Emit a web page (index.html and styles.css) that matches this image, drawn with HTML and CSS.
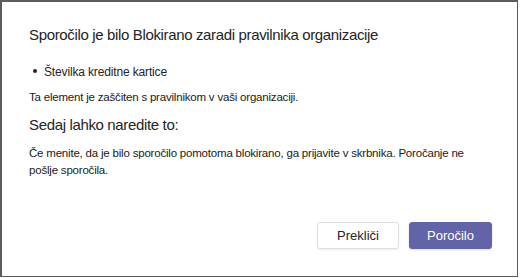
FILE: index.html
```html
<!DOCTYPE html>
<html lang="sl">
<head>
  <meta charset="UTF-8" />
  <title>Sporočilo je bilo blokirano</title>
  <link rel="stylesheet" href="styles.css">
</head>
<body>
  <div class="dialog" role="dialog" aria-labelledby="dlg-title">
    <h1 id="dlg-title">Sporočilo je bilo Blokirano zaradi pravilnika organizacije</h1>

    <ul class="reasons">
      <li>Številka kreditne kartice</li>
    </ul>
    <p class="note">Ta element je zaščiten s pravilnikom v vaši organizaciji.</p>

    <h2>Sedaj lahko naredite to:</h2>
    <p class="note body">Če menite, da je bilo sporočilo pomotoma blokirano, ga prijavite v skrbnika. Poročanje ne pošlje sporočila.</p>

    <div class="actions">
      <button class="btn">Prekliči</button>
      <button class="btn primary">Poročilo</button>
    </div>
  </div>
</body>
</html>
```

FILE: styles.css
```css
/* Reset & base */
*, *::before, *::after {
  box-sizing: border-box;
}
body {
  margin: 0;
  font-family: 'Liberation Sans', Arial, sans-serif;
  background: #ffffff;
  color: #252423;
}

/* Dialog frame */
.dialog {
  width: 518px;
  height: 277px;
  border: 1px solid #5c5c5c;
  border-top-width: 2px;
  border-left-width: 2px;
  padding: 23px 25px 27px 27px;
  display: flex;
  flex-direction: column;
}
.dialog h1,
.dialog h2 {
  margin: 0;
  font-size: 15px;
  line-height: 20px;
  font-weight: 400;
  letter-spacing: -0.35px;
  color: #252423;
}

/* Blocked reasons */
.reasons {
  list-style: none;
  margin: 19px 0 0;
  padding: 0;
  font-size: 12px;
  line-height: 16px;
  letter-spacing: -0.15px;
}
.reasons li {
  position: relative;
  padding-left: 15px;
}
.reasons li::before {
  content: "";
  position: absolute;
  left: 4px;
  top: 5px;
  width: 4px;
  height: 4px;
  border-radius: 50%;
  background: #252423;
}

.note {
  margin: 9px 0 10px;
  font-size: 11.5px;
  line-height: 16px;
  color: #1b1a19;
  letter-spacing: -0.2px;
}
.note.body {
  margin: 10px 0 0;
  line-height: 17px;
}

/* Buttons */
.actions {
  margin-top: auto;
  display: flex;
  justify-content: flex-end;
  gap: 10px;
}
.btn {
  width: 82px;
  height: 27px;
  font-family: inherit;
  font-size: 13px;
  color: #252423;
  background: #ffffff;
  border: 1px solid #e1dfdd;
  border-radius: 3px;
  box-shadow: 0 1px 2px rgba(0, 0, 0, 0.08);
  cursor: pointer;
}
.btn.primary {
  width: 83px;
  background: #6264a7;
  border-color: #6264a7;
  color: #ffffff;
  box-shadow: 0 1px 2px rgba(0, 0, 0, 0.15);
}
```
